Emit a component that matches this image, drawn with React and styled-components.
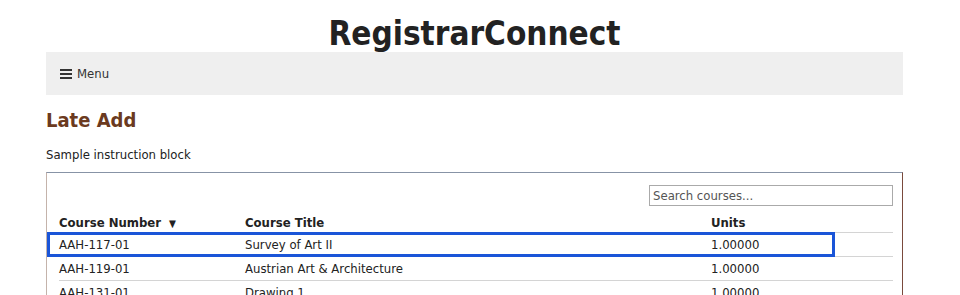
import styled, { createGlobalStyle } from "styled-components";

const GlobalStyle = createGlobalStyle`
  body {
    margin: 0;
    background: #ffffff;
    font-family: "DejaVu Sans Condensed", "DejaVu Sans", sans-serif;
    color: #222222;
  }
`;

const Page = styled.div`
  width: 857px;
  margin-left: 46px;
`;

const Title = styled.h1`
  margin: 0;
  height: 52px;
  line-height: 68px;
  text-align: center;
  font-size: 33px;
  font-weight: 700;
  color: #222222;
`;

const NavBar = styled.nav`
  height: 43px;
  background: #efefef;
  display: flex;
  align-items: center;
  padding-left: 14px;
  gap: 4px;
  font-size: 13px;
  color: #333333;
`;

const Heading = styled.h2`
  margin: 12px 0 0;
  font-size: 20px;
  line-height: 26px;
  font-weight: 700;
  color: #6b3a20;
`;

const Instruction = styled.p`
  margin: 14px 0 0;
  font-size: 13px;
  line-height: 16px;
`;

const Panel = styled.section`
  margin-top: 9px;
  border-top: 1px solid #8793a6;
  border-left: 1px solid #c4b3ab;
  border-right: 1px solid #7a4a3c;
  padding: 12px 9px 0 12px;
  height: 124px;
  overflow: hidden;
`;

const Toolbar = styled.div`
  display: flex;
  justify-content: flex-end;
`;

const Search = styled.input`
  width: 244px;
  height: 21px;
  box-sizing: border-box;
  border: 1px solid #aaaaaa;
  padding: 0 3px;
  font-family: inherit;
  font-size: 13px;
  color: #222222;
  &::placeholder {
    color: #555555;
  }
`;

const Row = styled.div`
  position: relative;
  display: grid;
  grid-template-columns: 186px 466px 1fr;
  height: ${(p) => (p.$head ? "19px" : "23px")};
  align-items: center;
  font-size: 13px;
  font-weight: ${(p) => (p.$head ? 700 : 400)};
  border-bottom: 1px solid #d4d4d4;
  margin-top: ${(p) => (p.$head ? "7px" : "0")};

  ${(p) =>
    p.$focused &&
    `
    &::after {
      content: "";
      position: absolute;
      left: -12px;
      right: 58px;
      top: -1px;
      bottom: -1px;
      border: 3px solid #1a55d8;
    }
  `}
`;

const SortArrow = styled.span`
  font-size: 10px;
  margin-left: 8px;
`;

const MenuIcon = () => (
  <svg width="13" height="12" viewBox="0 0 13 12">
    <rect x="0" y="1" width="12" height="2" fill="#333" />
    <rect x="0" y="5" width="12" height="2" fill="#333" />
    <rect x="0" y="9" width="12" height="2" fill="#333" />
  </svg>
);

const courses = [
  ["AAH-117-01", "Survey of Art II", "1.00000"],
  ["AAH-119-01", "Austrian Art & Architecture", "1.00000"],
  ["AAH-131-01", "Drawing 1", "1.00000"],
];

export default function App() {
  return (
    <>
      <GlobalStyle />
      <Page>
        <Title>RegistrarConnect</Title>
        <NavBar>
          <MenuIcon />
          <span>Menu</span>
        </NavBar>
        <Heading>Late Add</Heading>
        <Instruction>Sample instruction block</Instruction>
        <Panel>
          <Toolbar>
            <Search placeholder="Search courses..." />
          </Toolbar>
          <Row $head>
            <span>
              Course Number<SortArrow>▼</SortArrow>
            </span>
            <span>Course Title</span>
            <span>Units</span>
          </Row>
          {courses.map((c, i) => (
            <Row key={c[0]} $focused={i === 0}>
              <span>{c[0]}</span>
              <span>{c[1]}</span>
              <span>{c[2]}</span>
            </Row>
          ))}
        </Panel>
      </Page>
    </>
  );
}
